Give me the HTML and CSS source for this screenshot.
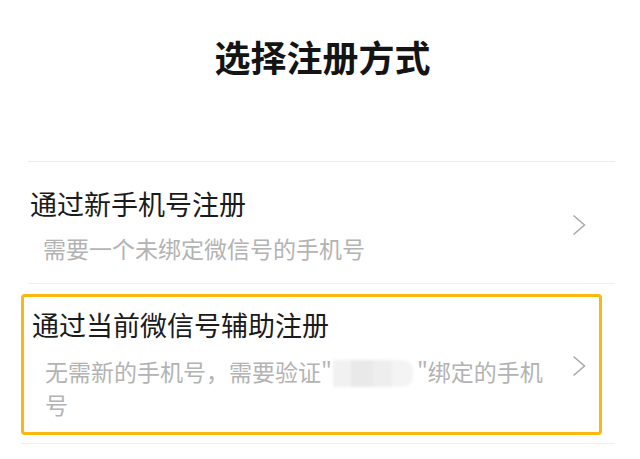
FILE: index.html
```html
<!DOCTYPE html>
<html lang="zh-CN">
<head>
<meta charset="utf-8">
<link rel="stylesheet" href="styles.css">
</head>
<body>
<div class="page">
  <header class="header">
    <h1 class="title">选择注册方式</h1>
  </header>
  <div class="list">
    <div class="item">
      <div class="row">
        <div class="text">
          <div class="item-title">通过新手机号注册</div>
          <div class="item-sub">需要一个未绑定微信号的手机号</div>
        </div>
        <svg class="chevron" viewBox="0 0 14 22" width="14" height="22"><path d="M1.5 1.5 L12.5 11 L1.5 20.5" fill="none" stroke="#a8a8a8" stroke-width="1.5"/></svg>
      </div>
    </div>
    <div class="item item-marked">
      <div class="mark">
        <div class="row">
          <div class="text">
            <div class="item-title">通过当前微信号辅助注册</div>
            <div class="item-sub sub-2"><span>无需新的手机号，需要验证"</span><span class="masked"></span><span>"绑定的手机</span><span>号</span></div>
          </div>
          <svg class="chevron" viewBox="0 0 14 22" width="14" height="22"><path d="M1.5 1.5 L12.5 11 L1.5 20.5" fill="none" stroke="#a8a8a8" stroke-width="1.5"/></svg>
        </div>
      </div>
    </div>
  </div>
</div>
</body>
</html>
```

FILE: styles.css
```css
* { box-sizing: border-box; }
html, body { margin: 0; padding: 0; background: #ffffff; }
body {
  width: 640px;
  height: 459px;
  overflow: hidden;
  font-family: "Noto Sans CJK SC", "Noto Sans", sans-serif;
}
.page { padding: 0 25px 0 28px; }
.header {
  height: 161px;
  padding-top: 38px;
  text-align: center;
}
.title {
  margin: 0;
  font-size: 36px;
  line-height: 36px;
  font-weight: 700;
  color: #141414;
  padding-left: 2px;
}
.list { border-top: 1px solid #ececec; }
.item {
  border-bottom: 1px solid #eeeeee;
  padding: 28px 29px 23px 2px;
}
.row {
  display: flex;
  align-items: center;
  gap: 18px;
}
.text { flex: 1; min-width: 0; }
.chevron { flex: none; display: block; }
.item-title {
  font-size: 27px;
  line-height: 27px;
  color: #1b1b1b;
}
.item-sub {
  margin-top: 20px;
  margin-left: 13px;
  font-size: 23px;
  line-height: 23px;
  color: #b3b3b3;
}
.item-marked {
  padding: 10px 13px 8px 0;
  margin-left: -7px;
}
.mark {
  border: 3px solid #fbb80d;
  border-radius: 4px;
  padding: 14px 13px 11px 8px;
}
.sub-2 {
  margin-top: 17px;
  line-height: 33px;
}
.masked {
  display: inline-block;
  width: 80px;
  height: 27px;
  vertical-align: -6px;
  margin: 0 4px 0 1px;
  background:
    linear-gradient(90deg, #f1f1f1 0 22%, #e9e9e9 22% 50%, #eeeeee 50% 74%, #f4f4f4 74% 100%);
  filter: blur(1.5px);
  border-radius: 2px 10px 10px 2px;
}
```
